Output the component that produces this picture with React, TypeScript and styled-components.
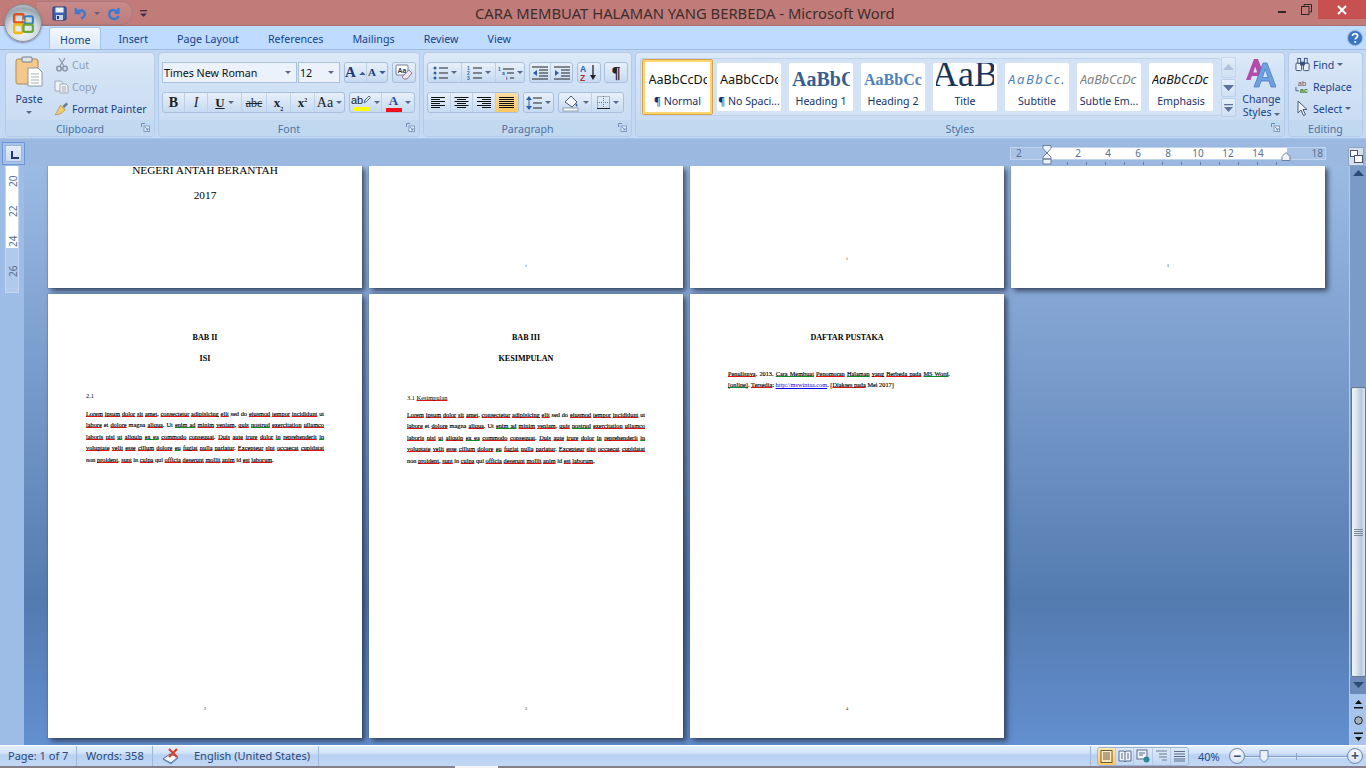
import React from "react";
import styled, { createGlobalStyle } from "styled-components";

const UI = `"Noto Sans", "Open Sans", sans-serif`;
const SERIF = `"Liberation Serif", serif`;

const Global = createGlobalStyle`
  html, body { margin: 0; padding: 0; height: 100%; overflow: hidden; }
  body { font-family: ${UI}; background: #bfdbff; }
  * { box-sizing: border-box; }
`;

const Win = styled.div`
  width: 1366px;
  height: 768px;
  display: flex;
  flex-direction: column;
  position: relative;
  overflow: hidden;
`;

/* title bar */
const TitleBar = styled.div`
  height: 26px;
  background: #c17c7a;
  border-bottom: 1px solid #a8706f;
  display: flex;
  align-items: flex-start;
  flex-shrink: 0;
`;
const Qat = styled.div`
  width: 96px;
  height: 24px;
  margin-left: 37px;
  margin-top: 1px;
  padding-left: 15px;
  border: 1px solid #a57b7f;
  border-left: none;
  border-radius: 0 12px 12px 0;
  background: linear-gradient(#c88a88, #bd7d7c);
  display: flex;
  align-items: center;
  gap: 6px;
`;
const QatMore = styled.div`
  width: 20px;
  height: 24px;
  margin-top: 1px;
  display: flex;
  align-items: center;
  justify-content: center;
`;
const TitleText = styled.div`
  margin-left: 322px;
  width: 424px;
  font-size: 14.8px;
  line-height: 27px;
  color: #3d2d2d;
  white-space: nowrap;
`;
const WinButtons = styled.div`
  margin-left: auto;
  display: flex;
  align-items: flex-start;
`;
const WinBtn = styled.div<{ $w: number; $close?: boolean }>`
  width: ${(p) => p.$w}px;
  height: 19px;
  background: ${(p) => (p.$close ? "#c75050" : "transparent")};
  display: flex;
  align-items: center;
  justify-content: center;
`;

/* orb */
const Orb = styled.div`
  position: absolute;
  z-index: 3;
  left: 4px;
  top: 4px;
  width: 38px;
  height: 38px;
  border-radius: 50%;
  background: radial-gradient(circle at 50% 75%, #eef4f8 0%, #d3dce3 45%, #98a4af 72%, #e4e9ee 100%);
  border: 1px solid #8b8f96;
  box-shadow: 0 1px 2px rgba(60, 60, 90, 0.5);
  display: flex;
  align-items: center;
  justify-content: center;
`;

/* tabs */
const TabRow = styled.div`
  height: 23px;
  background: #bfdbff;
  display: flex;
  align-items: flex-end;
  padding-left: 49px;
  gap: 7px;
  position: relative;
  flex-shrink: 0;
`;
const Tab = styled.div<{ $active?: boolean }>`
  height: 22px;
  padding: 0 11px;
  font-size: 10.7px;
  line-height: 25px;
  color: #15428b;
  border-radius: 3px 3px 0 0;
  ${(p) =>
    p.$active
      ? `background: linear-gradient(#f4f8fe, #dbe8f8); border: 1px solid #a4c2e4; border-bottom: none; padding: 0 10px; margin-right: -1px;`
      : ""}
`;
const HelpBtn = styled.div`
  position: absolute;
  right: 3px;
  top: 3px;
  width: 16px;
  height: 16px;
`;

/* ribbon */
const Ribbon = styled.div`
  height: 90px;
  background: linear-gradient(#c0d8f6, #c4d9f3);
  border-top: 1px solid #9fbcdd;
  border-bottom: 1px solid #aac4e4;
  padding: 2px 3px 0 5px;
  display: flex;
  gap: 3px;
  flex-shrink: 0;
`;
const Group = styled.div<{ $w: number }>`
  width: ${(p) => p.$w}px;
  height: 85px;
  border: 1px solid #b3cbe7;
  border-radius: 4px;
  display: flex;
  flex-direction: column;
  background: linear-gradient(#dde9f8 0, #d5e4f6 20%, #c7daf2 100%);
  overflow: hidden;
  flex-shrink: 0;
`;
const GroupBody = styled.div`
  flex: 1;
  min-height: 0;
  display: flex;
`;
const GroupLabel = styled.div`
  height: 16px;
  position: relative;
  background: #c1d8f1;
  color: #4f71a0;
  font-size: 10.6px;
  line-height: 18px;
  text-align: center;
`;
const LauncherBox = styled.svg`
  position: absolute;
  right: 4px;
  top: 3px;
`;
const PasteBtn = styled.div`
  width: 46px;
  display: flex;
  flex-direction: column;
  align-items: center;
  padding-top: 3px;
  font-size: 10.6px;
  color: #15428b;
  line-height: 14px;
`;
const PasteLabel = styled.span`
  margin-top: 5px;
`;
const PasteCaret = styled.span`
  margin-top: 4px;
  line-height: 0;
`;
const SmallCol = styled.div<{ $ml?: number }>`
  display: flex;
  flex-direction: column;
  margin-left: ${(p) => p.$ml ?? 2}px;
`;
const SmallRow = styled.div<{ $off?: boolean }>`
  height: 22px;
  padding-top: 1px;
  display: flex;
  align-items: center;
  gap: 3px;
  font-size: 10.6px;
  white-space: nowrap;
  color: ${(p) => (p.$off ? "#8c9db3" : "#15428b")};
`;
const IconSlot = styled.span`
  width: 15px;
  height: 16px;
  display: inline-flex;
  align-items: center;
  justify-content: center;
`;
const Stack = styled.div<{ $top: number; $left: number; $gap: number }>`
  display: flex;
  flex-direction: column;
  gap: ${(p) => p.$gap}px;
  padding-top: ${(p) => p.$top}px;
  padding-left: ${(p) => p.$left}px;
`;
const CtlRow = styled.div`
  display: flex;
  gap: 4px;
  height: 21px;
`;
const ComboPair = styled.div`
  display: flex;
  gap: 1px;
`;
const Combo = styled.div<{ $w: number }>`
  width: ${(p) => p.$w}px;
  height: 21px;
  background: #ebf2fb;
  border: 1px solid #abc2de;
  font-size: 10.7px;
  line-height: 21px;
  padding-left: 1px;
  color: #111;
  position: relative;
`;
const BtnGroup = styled.div<{ $ml?: number }>`
  display: flex;
  height: 21px;
  margin-left: ${(p) => p.$ml || 0}px;
  border: 1px solid #a9c0dc;
  border-radius: 3px;
  background: linear-gradient(#e8f0fa 0, #d7e5f6 50%, #c6daf2 100%);
  overflow: hidden;
`;
const Seg = styled.div<{ $w: number; $on?: boolean }>`
  width: ${(p) => p.$w}px;
  height: 100%;
  display: flex;
  align-items: center;
  justify-content: center;
  gap: 3px;
  border-right: 1px solid #bcd0e8;
  color: #222;
  background: ${(p) => (p.$on ? "linear-gradient(#fbe0a0, #fbc760)" : "transparent")};
  &:last-child { border-right: none; }
`;
const Caret = styled.span<{ $c?: string }>`
  width: 0;
  height: 0;
  border-left: 3px solid transparent;
  border-right: 3px solid transparent;
  border-top: 3px solid ${(p) => p.$c || "#56688a"};
  display: inline-block;
`;
const ComboCaret = styled(Caret)`
  position: absolute;
  right: 5px;
  top: 8px;
`;
const Glyph = styled.span<{ $size?: number; $bold?: boolean; $italic?: boolean; $strike?: boolean; $under?: boolean; $color?: string; $sans?: boolean }>`
  font-family: ${(p) => (p.$sans ? `"Liberation Sans", sans-serif` : SERIF)};
  font-size: ${(p) => p.$size || 13}px;
  font-weight: ${(p) => (p.$bold ? 700 : 400)};
  font-style: ${(p) => (p.$italic ? "italic" : "normal")};
  text-decoration: ${(p) => (p.$strike ? "line-through" : p.$under ? "underline" : "none")};
  color: ${(p) => p.$color || "#222"};
  line-height: 1;
  white-space: nowrap;
  sub, sup { font-size: 6px; line-height: 0; }
`;
const Swatch = styled.span<{ $c: string }>`
  display: flex;
  flex-direction: column;
  align-items: center;
  line-height: 1;
  &::after {
    content: "";
    width: 16px;
    height: 4px;
    margin-top: 1px;
    background: ${(p) => p.$c};
  }
`;
const Gallery = styled.div`
  width: 593px;
  height: 58px;
  margin-left: 4px;
  margin-top: 5px;
  display: flex;
  align-items: center;
  background: #d3e2f5;
  border: 1px solid #bed2ea;
  border-right: none;
  border-radius: 3px;
  padding-left: 1px;
`;
const TileSlot = styled.div<{ $sel?: boolean }>`
  width: ${(p) => (p.$sel ? 71 : 64)}px;
  height: ${(p) => (p.$sel ? 56 : 48)}px;
  margin-right: ${(p) => (p.$sel ? 4 : 8)}px;
  flex-shrink: 0;
  padding: ${(p) => (p.$sel ? "3px 3px" : 0)};
  background: #fff;
  border-radius: 2px;
  ${(p) => (p.$sel ? `border: 1px solid #d7a24d; box-shadow: inset 0 0 0 2px #fbd66f;` : "")}
  display: flex;
  flex-direction: column;
  align-items: center;
  overflow: hidden;
`;
const Sample = styled.div<{ $font?: string; $size: number; $color: string; $bold?: boolean; $italic?: boolean; $ls?: number; $lh?: number }>`
  height: 30px;
  width: 58px;
  overflow: hidden;
  white-space: nowrap;
  font-family: ${(p) => p.$font || UI};
  font-size: ${(p) => p.$size}px;
  color: ${(p) => p.$color};
  font-weight: ${(p) => (p.$bold ? 700 : 400)};
  font-style: ${(p) => (p.$italic ? "italic" : "normal")};
  letter-spacing: ${(p) => p.$ls || 0}px;
  line-height: ${(p) => p.$lh || 33}px;
  display: flex;
  justify-content: ${(p) => (p.$lh ? "center" : "flex-start")};
`;
const Caption = styled.div`
  font-size: 10.6px;
  line-height: 19px;
  color: #15306b;
  white-space: nowrap;
  width: 64px;
  text-align: center;
  overflow: hidden;
`;
const GalleryScroll = styled.div`
  width: 15px;
  margin-top: 4px;
  height: 60px;
  display: flex;
  flex-direction: column;
  gap: 1px;
`;
const ScrollPart = styled.div<{ $h: number; $dim?: boolean }>`
  height: ${(p) => p.$h}px;
  border: 1px solid #bcd0e8;
  border-radius: 2px;
  background: linear-gradient(#e6effa, #cfdff3);
  display: flex;
  flex-direction: column;
  align-items: center;
  justify-content: center;
  gap: 2px;
  opacity: ${(p) => (p.$dim ? 0.7 : 1)};
`;
const ChangeStyles = styled.div`
  width: 46px;
  margin-left: 3px;
  padding-top: 5px;
  display: flex;
  flex-direction: column;
  align-items: center;
  font-size: 10.6px;
  line-height: 13px;
  color: #15428b;
  text-align: center;
  white-space: nowrap;
`;
const ChangeLabel = styled.span`
  margin-top: 5px;
`;

/* ruler strip */
const RulerStrip = styled.div`
  height: 27px;
  background: #9ab8e0;
  display: flex;
  flex-shrink: 0;
`;
const TabStop = styled.div`
  width: 23px;
  height: 23px;
  margin: 3px 0 0 2px;
  border: 1px solid #6d96d8;
  background: #a8c3ea;
  padding: 2px;
`;
const TabStopFace = styled.div`
  width: 100%;
  height: 100%;
  background: linear-gradient(#e4edf9, #cbdcf2);
  border: 1px solid #9bb4d6;
  position: relative;
  &::before {
    content: "";
    position: absolute;
    left: 5px;
    top: 5px;
    width: 6px;
    height: 6px;
    border-left: 2px solid #223a66;
    border-bottom: 2px solid #223a66;
  }
`;
const HRuler = styled.div`
  width: 316px;
  height: 13px;
  margin: 8px 0 0 985px;
  display: flex;
  position: relative;
  border: 1px solid #c1d4ee;
  background: #a9c3e8;
  font-size: 10px;
  line-height: 11px;
  color: #5c6f8c;
  text-align: center;
  &::after {
    content: "";
    position: absolute;
    left: 56px;
    top: 14px;
    width: 212px;
    height: 3px;
    background: repeating-linear-gradient(90deg, #6a7f9f 0 1px, transparent 1px 19px);
  }
`;
const RulerMargin = styled.div<{ $w: number; $right?: boolean }>`
  width: ${(p) => p.$w}px;
  text-align: ${(p) => (p.$right ? "right" : "left")};
  padding: ${(p) => (p.$right ? "0 2px 0 0" : "0 0 0 5px")};
`;
const RulerWhite = styled.div`
  width: 239px;
  background: #fff;
  padding-left: 15px;
  display: flex;
`;
const RulerNum = styled.span`
  width: 30px;
  flex-shrink: 0;
`;
const MarkerLeft = styled.svg`
  position: absolute;
  left: 31px;
  top: -3px;
`;
const MarkerRight = styled.svg`
  position: absolute;
  left: 270px;
  top: 4px;
`;
const ViewToggle = styled.div`
  width: 16px;
  height: 19px;
  margin: 8px 0 0 22px;
  border: 1px solid #92a6c4;
  background: #d5e0ef;
  display: flex;
  align-items: center;
  justify-content: center;
`;

/* main */
const Main = styled.div`
  height: 579px;
  display: flex;
  flex-shrink: 0;
`;
const VRulerCol = styled.div`
  width: 24px;
  background: #9dbde6;
  padding-left: 5px;
  flex-shrink: 0;
`;
const VRuler = styled.div`
  width: 14px;
  height: 127px;
  border: 1px solid #c5d7ef;
  border-top: none;
  background: linear-gradient(#fff 0, #fff 82px, #b1c9ea 82px, #b1c9ea 100%);
  color: #5c6f8c;
  font-size: 10px;
  overflow: hidden;
`;
const VNum = styled.div`
  height: 30px;
  display: flex;
  align-items: center;
  justify-content: center;
  writing-mode: vertical-rl;
  transform: rotate(180deg);
`;
const Doc = styled.div`
  width: 1325px;
  background: linear-gradient(#9bbbe4 0, #87a8d6 21%, #547bb0 75%, #628fcf 100%);
  padding-left: 24px;
  display: flex;
  flex-direction: column;
  gap: 6px;
  overflow: hidden;
`;
const PageRow = styled.div`
  display: flex;
  gap: 7px;
`;
const Page = styled.div<{ $h: number }>`
  width: 314px;
  height: ${(p) => p.$h}px;
  background: #fff;
  box-shadow: 0 0 1px #3f4f6a, 3px 3px 5px rgba(35, 45, 65, 0.75);
  display: flex;
  flex-direction: column;
  align-items: center;
  padding: 0 38px;
  font-family: ${SERIF};
  color: #000;
  flex-shrink: 0;
`;
const CoverLine = styled.div<{ $mt?: number }>`
  font-size: 11.3px;
  line-height: 8px;
  margin-top: ${(p) => p.$mt || 0}px;
  white-space: nowrap;
`;
const PageNum = styled.div<{ $b: number }>`
  margin-top: auto;
  margin-bottom: ${(p) => p.$b}px;
  font-size: 5px;
  line-height: 5px;
  color: #333;
`;
const Heading = styled.div<{ $mt: number }>`
  font-size: 8.1px;
  font-weight: 700;
  line-height: 8px;
  margin-top: ${(p) => p.$mt}px;
  white-space: nowrap;
`;
const SubHead = styled.div<{ $mt: number }>`
  align-self: flex-start;
  font-size: 6.4px;
  line-height: 8px;
  margin-top: ${(p) => p.$mt}px;
  white-space: nowrap;
`;
const Para = styled.div<{ $mt: number; $w?: number }>`
  width: ${(p) => p.$w || 238}px;
  align-self: flex-start;
  margin-top: ${(p) => p.$mt}px;
  font-size: 6.3px;
  line-height: 11.4px;
  -webkit-text-stroke: 0.15px #000;
`;
const ParaLine = styled.div<{ $last?: boolean }>`
  white-space: nowrap;
  text-align: justify;
  text-align-last: ${(p) => (p.$last ? "left" : "justify")};
`;
const Err = styled.span<{ $g?: boolean }>`
  text-decoration: underline solid ${(p) => (p.$g ? "#0b8a2a" : "#e01010")} 1px;
  text-decoration-skip-ink: none;
  text-underline-offset: 0;
`;
const LinkText = styled.span`
  color: #0000e6;
  -webkit-text-stroke: 0;
  text-decoration: underline;
`;

/* scrollbar */
const VScroll = styled.div`
  width: 17px;
  background: #7a9bc8;
  border-left: 1px solid #b0cbee;
  display: flex;
  flex-direction: column;
  align-items: center;
  flex-shrink: 0;
`;
const ScrollUp = styled.div`
  height: 221px;
  width: 100%;
  padding-top: 4px;
  display: flex;
  justify-content: center;
`;
const Thumb = styled.div`
  width: 15px;
  height: 290px;
  border: 1px solid #64778f;
  border-radius: 2px;
  background: linear-gradient(90deg, #f0f5fb, #dfe7f2 30%, #b9c8dc 70%, #dde6f2);
  display: flex;
  align-items: center;
  justify-content: center;
`;
const Grip = styled.div`
  width: 9px;
  height: 7px;
  background: repeating-linear-gradient(#7c8ba0 0 1px, transparent 1px 2px);
`;
const ScrollDown = styled.div`
  height: 17px;
  width: 100%;
  background: #6c8bb9;
  display: flex;
  align-items: center;
  justify-content: center;
`;
const NavCol = styled.div`
  flex: 1;
  width: 100%;
  background: #a7c4ec;
  display: flex;
  flex-direction: column;
  align-items: center;
  justify-content: space-around;
  padding: 2px 0 0;
`;

/* status bar */
const Status = styled.div`
  height: 21px;
  background: linear-gradient(#e6f0fc 0, #d2e3f9 35%, #b9d1f1 45%, #c2d8f5 100%);
  border-top: 1px solid #fff;
  display: flex;
  align-items: center;
  font-size: 11px;
  color: #2a4a7a;
  flex-shrink: 0;
`;
const StatusCell = styled.div<{ $w: number; $pl: number }>`
  width: ${(p) => p.$w}px;
  padding-left: ${(p) => p.$pl}px;
  height: 100%;
  line-height: 20px;
  border-right: 1px solid #9fb8d8;
  white-space: nowrap;
  display: flex;
  align-items: center;
  gap: 14px;
`;
const StatusRight = styled.div`
  margin-left: auto;
  width: 276px;
  height: 100%;
  border-left: 1px solid #9fb8d8;
  padding-left: 6px;
  display: flex;
  align-items: center;
`;
const ViewGroup = styled.div`
  width: 92px;
  height: 19px;
  display: flex;
  border: 1px solid #9db6d6;
  border-radius: 3px;
  overflow: hidden;
`;
const ViewBtn = styled.div<{ $on?: boolean }>`
  flex: 1;
  display: flex;
  align-items: center;
  justify-content: center;
  border-right: 1px solid #b5cae6;
  background: ${(p) => (p.$on ? "linear-gradient(#fde6ad, #fbc965)" : "linear-gradient(#dce9f9, #c2d7f2)")};
  &:last-child { border-right: none; }
`;
const Zoom = styled.span`
  margin-left: 9px;
  width: 31px;
  color: #1f4a8c;
`;
const RoundBtn = styled.div`
  width: 16px;
  height: 16px;
  flex-shrink: 0;
  border-radius: 50%;
  border: 1px solid #6f88aa;
  background: radial-gradient(circle at 50% 30%, #fff, #c8d8ec);
  display: flex;
  align-items: center;
  justify-content: center;
  color: #3c4f6c;
  font-weight: 700;
  font-size: 14px;
  line-height: 1;
`;
const Slider = styled.div`
  width: 102px;
  height: 1px;
  background: #7f9cc4;
  box-shadow: 0 1px 0 #e6f0fb;
  position: relative;
`;
const SliderTick = styled.span`
  position: absolute;
  left: 51px;
  top: -3px;
  width: 1px;
  height: 7px;
  background: #8aa4c8;
`;
const SliderThumb = styled.svg`
  position: absolute;
  left: 14px;
  top: -6px;
`;
const BottomEdge = styled.div`
  height: 2px;
  background: #877e8c;
  padding-left: 455px;
  flex-shrink: 0;
`;
const EdgeTab = styled.div`
  width: 43px;
  height: 2px;
  background: #f5f5f5;
`;

/* icons */
const OfficeLogo = () => (
  <svg width="25" height="25" viewBox="0 0 24 24">
    <rect x="3" y="3" width="9" height="8" rx="1.5" fill="none" stroke="#d9541e" strokeWidth="2.4" />
    <rect x="13" y="5" width="8" height="7" rx="1.5" fill="none" stroke="#2e7fc4" strokeWidth="2" />
    <rect x="3" y="13" width="8" height="8" rx="1.5" fill="none" stroke="#f2b81c" strokeWidth="2.4" />
    <rect x="12" y="13" width="9" height="7" rx="1.5" fill="none" stroke="#6aa83a" strokeWidth="2.2" />
    <g fill="#e8c23a"><circle cx="12" cy="9" r="1" /><circle cx="15" cy="9" r="1" /><circle cx="9" cy="14" r="1" /></g>
  </svg>
);
const Launcher = () => (
  <LauncherBox width="9" height="9" viewBox="0 0 9 9">
    <path d="M.5 4V.5H4" fill="none" stroke="#6f8ab0" />
    <rect x="3" y="3" width="5.500" height="5.500" fill="#e6eef8" stroke="#7f9bbf" />
    <path d="M4 4l3 3M7 5v2H5" fill="none" stroke="#5d7ca5" strokeWidth=".8" />
  </LauncherBox>
);
const SaveIcon = () => (
  <svg width="15" height="15" viewBox="0 0 15 15">
    <rect x="1" y="1" width="13" height="13" rx="1" fill="#3c62b0" stroke="#20387a" />
    <rect x="3.500" y="1.500" width="8" height="5" fill="#eef3fa" />
    <rect x="4" y="9" width="7" height="5" fill="#c9d4e6" />
    <rect x="5" y="10" width="2" height="3" fill="#20387a" />
  </svg>
);
const UndoIcon = () => (
  <svg width="15" height="15" viewBox="0 0 16 15" fill="none">
    <path d="M3 2v5h5" stroke="#3d7ad0" strokeWidth="2.400" />
    <path d="M3.500 6.500C6 3.500 12 3.500 12.500 7.500c.3 2.500-2 4.500-4 5.500" stroke="#3d7ad0" strokeWidth="2.600" />
  </svg>
);
const RedoIcon = () => (
  <svg width="16" height="15" viewBox="0 0 16 15" fill="none">
    <path d="M12.500 2v5h-4" stroke="#3d7ad0" strokeWidth="2.200" />
    <path d="M12 6.500C10 3.500 5 3 3.500 6.500c-1.200 3 .8 6 4 6.500 2 .2 4-.8 5-3" stroke="#3d7ad0" strokeWidth="2.400" />
  </svg>
);
const QatCaret = () => (
  <svg width="9" height="9" viewBox="0 0 9 9">
    <rect x="1" y="1" width="7" height="1.400" fill="#40304a" />
    <path d="M1 4.500h7L4.500 8z" fill="#40304a" />
  </svg>
);
const HelpIcon = () => (
  <svg width="16" height="16" viewBox="0 0 16 16">
    <circle cx="8" cy="8" r="7.500" fill="#3b74c4" stroke="#9ab7dc" />
    <path d="M5.500 6c0-3 5.200-3 5.200-.2 0 1.900-2.400 1.900-2.400 3.700" fill="none" stroke="#fff" strokeWidth="1.700" />
    <circle cx="8.200" cy="12" r="1.100" fill="#fff" />
  </svg>
);
const PasteIcon = () => (
  <svg width="28" height="31" viewBox="0 0 28 31">
    <rect x="1" y="3" width="22" height="25" rx="2" fill="#f3c88a" stroke="#b08a50" />
    <rect x="7" y="1" width="10" height="5" rx="1" fill="#dfe3ea" stroke="#707c8c" />
    <path d="M13 12h10l4 4v14H13z" fill="#fff" stroke="#8a97a8" />
    <path d="M16 18h8M16 21h8M16 24h8M16 27h8" stroke="#a4afbd" />
  </svg>
);
const CutIcon = () => (
  <svg width="14" height="15" viewBox="0 0 14 15" fill="none" stroke="#8d99a8" strokeWidth="1.200">
    <path d="M4 1l5 8M10 1L5 9" />
    <circle cx="4" cy="11.500" r="2.300" strokeWidth="1.600" />
    <circle cx="10" cy="11.500" r="2.300" strokeWidth="1.600" />
  </svg>
);
const CopyIcon = () => (
  <svg width="15" height="14" viewBox="0 0 15 14" fill="#eef2f7" stroke="#a1abb8">
    <path d="M1 1h6l2 2v8H1z" />
    <path d="M6 4h6l2 2v7H6z" />
    <path d="M8 7h4M8 9h4M8 11h4" />
  </svg>
);
const BrushIcon = () => (
  <svg width="16" height="15" viewBox="0 0 16 15">
    <path d="M9 5l4-4 2 2-4 4z" fill="#6a7a90" />
    <path d="M7 4l5 5-2 1.500C8.500 13 4 14.500 1 14c2-1 2-3 3.500-5.500z" fill="#f0cc6a" stroke="#a8843a" strokeWidth=".7" />
  </svg>
);
const GrowIcon = ({ up }: { up: boolean }) => (
  <svg width="7" height="4" viewBox="0 0 8 5">
    <path d={up ? "M0 5l4-4 4 4z" : "M0 0h8L4 4z"} fill="#3a5c90" />
  </svg>
);
const ClearIcon = () => (
  <svg width="18" height="17" viewBox="0 0 18 17">
    <rect x="1" y="1" width="12" height="10" rx="1" fill="#fff" stroke="#6e7f96" />
    <text x="2.500" y="9" fontSize="7" fontFamily="Liberation Sans" fontWeight="700" fill="#24426e">Aa</text>
    <path d="M9 11l5-5 3 3-5 6H9l-2-2z" fill="#f0e4ee" stroke="#8a7c90" />
  </svg>
);
const HighlightIcon = () => (
  <Swatch $c="#ffff00">
    <Glyph $size={11} $sans>
      ab
      <svg width="8" height="9" viewBox="0 0 8 9"><path d="M1 8l1-3 4-4 1.500 1.500-4 4z" fill="none" stroke="#5a6a80" /></svg>
    </Glyph>
  </Swatch>
);
const BulletsIcon = () => (
  <svg width="15" height="14" viewBox="0 0 15 14">
    <g fill="#2d5fa8"><circle cx="2" cy="2" r="1.500" /><circle cx="2" cy="7" r="1.500" /><circle cx="2" cy="12" r="1.500" /></g>
    <path d="M6 2h9M6 7h9M6 12h9" stroke="#222" />
  </svg>
);
const NumbersIcon = () => (
  <svg width="15" height="14" viewBox="0 0 15 14">
    <g fontSize="5" fontFamily="Liberation Sans" fill="#2d5fa8" fontWeight="700">
      <text x="0" y="4">1</text><text x="0" y="9">2</text><text x="0" y="14">3</text>
    </g>
    <path d="M6 2h9M6 7h9M6 12h9" stroke="#222" />
  </svg>
);
const MultiIcon = () => (
  <svg width="16" height="14" viewBox="0 0 16 14">
    <g fontSize="5" fontFamily="Liberation Sans" fill="#2d5fa8" fontWeight="700">
      <text x="0" y="5">1</text><text x="4" y="9">a</text><text x="8" y="14">i</text>
    </g>
    <path d="M5 3h11M9 7h7M12 12h4" stroke="#222" />
  </svg>
);
const IndentIcon = ({ rev }: { rev?: boolean }) => (
  <svg width="16" height="14" viewBox="0 0 16 14">
    <path d="M0 1h16M7 4h9M7 7h9M7 10h9M0 13h16" stroke="#222" />
    <path d={rev ? "M5 4v6L1 7z" : "M1 4v6l4-3z"} fill="#2d5fa8" />
  </svg>
);
const SortIcon = () => (
  <svg width="18" height="17" viewBox="0 0 18 17">
    <text x="0" y="8" fontSize="8.500" fontWeight="700" fontFamily="Liberation Sans" fill="#2d5fa8">A</text>
    <text x="0" y="16.500" fontSize="8.500" fontWeight="700" fontFamily="Liberation Sans" fill="#b03030">Z</text>
    <path d="M13 1v13" stroke="#222" strokeWidth="1.300" />
    <path d="M10 11h6l-3 5z" fill="#222" />
  </svg>
);
const AlignIcon = ({ mode }: { mode: "l" | "c" | "r" | "j" }) => {
  const rows = [14, 9, 14, 9, 14, 9];
  return (
    <svg width="15" height="13" viewBox="0 0 15 13">
      {rows.map((w, i) => {
        const len = mode === "j" ? 15 : w;
        const x = mode === "c" ? (15 - len) / 2 : mode === "r" ? 15 - len : 0;
        return <rect key={i} x={x} y={i * 2 + 1} width={len} height="1" fill="#111" />;
      })}
    </svg>
  );
};
const SpacingIcon = () => (
  <svg width="16" height="16" viewBox="0 0 16 16">
    <path d="M3 1l3 4H0zM3 15l3-4H0z" fill="#2d5fa8" />
    <path d="M3 4v8" stroke="#2d5fa8" />
    <path d="M7 3h9M7 8h9M7 13h9" stroke="#222" />
  </svg>
);
const BucketIcon = () => (
  <svg width="18" height="18" viewBox="0 0 18 18">
    <path d="M3 8l6-6 6 6-5 5z" fill="#f3f5f8" stroke="#4a5a70" />
    <path d="M14 9c1.500 2 2 3 1 3.500S13 11 14 9z" fill="#2d5fa8" />
    <rect x="1" y="14" width="15" height="3" fill="#fff" stroke="#8d9db2" />
  </svg>
);
const BordersIcon = () => (
  <svg width="13" height="13" viewBox="0 0 13 13" fill="none" stroke="#6d7d92" strokeDasharray="1 1">
    <rect x=".5" y=".5" width="12" height="12" />
    <path d="M6.500 0v13M0 6.500h13" />
    <path d="M0 12.500h13" stroke="#222" strokeDasharray="none" />
  </svg>
);
const ChangeStylesIcon = () => (
  <svg width="30" height="30" viewBox="0 0 30 30">
    <path fillRule="evenodd" d="M0 22L8 1h4l5 13-3 8-1.500-4H6l-1.500 4zM7.200 14.500h4L9.200 8.500z" fill="#b44ba8" />
    <path fillRule="evenodd" d="M8 29L17 5h4l9 24h-5l-2-6h-8l-2 6zM16.500 19.500h5.500L19.200 11z" fill="#6ea2de" stroke="#3b74bb" strokeWidth=".7" />
  </svg>
);
const BinocularsIcon = () => (
  <svg width="16" height="15" viewBox="0 0 16 15" fill="#e9eef5" stroke="#36507a">
    <rect x="1" y="6" width="6" height="8" rx="1" />
    <rect x="9" y="6" width="6" height="8" rx="1" />
    <rect x="3" y="1" width="3" height="5" />
    <rect x="10" y="1" width="3" height="5" />
    <rect x="6" y="5" width="4" height="3" fill="#36507a" />
  </svg>
);
const ReplaceIcon = () => (
  <svg width="16" height="15" viewBox="0 0 16 15">
    <text x="3" y="6.500" fontSize="8" fontFamily="Liberation Sans" fill="#556">ab</text>
    <text x="5" y="14.500" fontSize="8" fontWeight="700" fontFamily="Liberation Sans" fill="#2f8a3a">ac</text>
    <path d="M1 8v4h3" stroke="#3a5c90" fill="none" />
  </svg>
);
const CursorIcon = () => (
  <svg width="13" height="17" viewBox="0 0 13 17">
    <path d="M2 1v12l3-3 2.500 5.500 2-1L7 9.500h4z" fill="#eef2f8" stroke="#4c5d78" />
  </svg>
);
const Triangle = ({ up, c }: { up?: boolean; c: string }) => (
  <svg width="11" height="7" viewBox="0 0 11 7">
    <path d={up ? "M0 6h11L5.500 0z" : "M0 0h11L5.500 6z"} fill={c} />
  </svg>
);
const DoubleCaret = ({ up }: { up: boolean }) => (
  <svg width="9" height="9" viewBox="0 0 9 9" fill="#111">
    <path d={up ? "M1 4h7L4.500 0zM0 7h9v1.400H0z" : "M1 5h7L4.500 9zM0 .600h9V2H0z"} />
  </svg>
);
const SpellIcon = () => (
  <svg width="18" height="17" viewBox="0 0 18 17">
    <path d="M1 11l7-5 8 3-7 6z" fill="#f4f6fb" stroke="#456a9e" />
    <path d="M2 12l7 4 7-6" fill="none" stroke="#6d90bf" />
    <path d="M7 1l8 8M15 1L7 9" stroke="#d8402a" strokeWidth="2.200" />
  </svg>
);
const ViewLines = ({ c }: { c: string }) => (
  <svg width="13" height="13" viewBox="0 0 13 13">
    <rect x="1" y=".5" width="11" height="12" fill="#fff" fillOpacity=".5" stroke={c} />
    <path d="M3 3h7M3 5h7M3 7h7M3 9h7" stroke={c} />
  </svg>
);
const ViewBook = () => (
  <svg width="14" height="13" viewBox="0 0 14 13" fill="#eef3fa" stroke="#5b6d88">
    <path d="M1 1h5l1 1 1-1h5v10H8l-1 1-1-1H1z" />
    <path d="M3 4h2M3 6h2M3 8h2M9 4h2M9 6h2M9 8h2M7 2v10" />
  </svg>
);
const ViewWeb = () => (
  <svg width="14" height="14" viewBox="0 0 14 14">
    <rect x="1" y="1" width="10" height="9" fill="#eef3fa" stroke="#5b6d88" />
    <path d="M3 4h6M3 6h4" stroke="#5b6d88" />
    <circle cx="10.500" cy="10.500" r="3" fill="#2a8a9a" />
  </svg>
);
const ViewOutline = () => (
  <svg width="13" height="12" viewBox="0 0 13 12" stroke="#6b7c94">
    <path d="M1 1h11M4 4h8M4 7h8M7 10h5" />
  </svg>
);
const ViewDraft = () => (
  <svg width="13" height="12" viewBox="0 0 13 12" stroke="#5b6d88">
    <path d="M1 1.500h11M1 4h11M1 6.500h11M1 9h11M1 11h11" />
  </svg>
);

const tiles = [
  { cap: "¶ Normal", text: "AaBbCcDc", size: 12.6, color: "#111", sel: true },
  { cap: "¶ No Spaci...", text: "AaBbCcDc", size: 12.6, color: "#111" },
  { cap: "Heading 1", text: "AaBbCc", size: 20, color: "#365f91", bold: true, font: SERIF },
  { cap: "Heading 2", text: "AaBbCc", size: 16, color: "#4f81bd", bold: true, font: SERIF },
  { cap: "Title", text: "AaB", size: 36, color: "#17365d", font: SERIF, lh: 23 },
  { cap: "Subtitle", text: "AaBbCc.", size: 13, color: "#4f81bd", italic: true, ls: 1.6 },
  { cap: "Subtle Em...", text: "AaBbCcDc", size: 12.6, color: "#808080", italic: true },
  { cap: "Emphasis", text: "AaBbCcDc", size: 12.6, color: "#111", italic: true },
];

const LoremBody = () => (
  <>
    <ParaLine>
      <Err>Lorem</Err> <Err>ipsum</Err> <Err>dolor</Err> <Err>sit</Err> <Err>amet</Err>, <Err>consectetur</Err> <Err>adipisicing</Err> <Err>elit</Err> sed do <Err>eiusmod</Err> <Err>tempor</Err> <Err>incididunt</Err> ut
    </ParaLine>
    <ParaLine>
      <Err>labore</Err> et <Err>dolore</Err> magna <Err>aliqua</Err>. Ut <Err $g>enim ad</Err> <Err>minim</Err> <Err>veniam</Err>, <Err>quis</Err> <Err $g>nostrud</Err> <Err>exercitation</Err> <Err>ullamco</Err>
    </ParaLine>
    <ParaLine>
      <Err>laboris</Err> <Err>nisi</Err> <Err $g>ut</Err> <Err>aliquip</Err> <Err $g>ex ea</Err> <Err>commodo</Err> <Err>consequat</Err>. <Err>Duis</Err> <Err>aute</Err> <Err>irure</Err> <Err>dolor</Err> <Err $g>in</Err> <Err>reprehenderit</Err> <Err $g>in</Err>
    </ParaLine>
    <ParaLine>
      <Err>voluptate</Err> <Err>velit</Err> <Err>esse</Err> <Err>cillum</Err> <Err>dolore</Err> <Err $g>eu</Err> <Err>fugiat</Err> <Err>nulla</Err> <Err>pariatur</Err>. <Err>Excepteur</Err> <Err>sint</Err> <Err>occaecat</Err> <Err>cupidatat</Err>
    </ParaLine>
    <ParaLine $last>
      non <Err>proident</Err>, <Err>sunt</Err> in <Err>culpa</Err> qui <Err>officia</Err> <Err>deserunt</Err> <Err>mollit</Err> <Err>anim</Err> id <Err>est</Err> <Err>laborum</Err>.
    </ParaLine>
  </>
);

export default function App() {
  return (
    <Win>
      <Global />
      <TitleBar>
        <Qat>
          <SaveIcon />
          <UndoIcon />
          <Caret $c="#6a5a78" />
          <RedoIcon />
        </Qat>
        <QatMore><QatCaret /></QatMore>
        <TitleText>CARA MEMBUAT HALAMAN YANG BERBEDA - Microsoft Word</TitleText>
        <WinButtons>
          <WinBtn $w={25}>
            <svg width="9" height="9" viewBox="0 0 9 9"><rect y="6" width="8" height="2" fill="#2e2a2a" /></svg>
          </WinBtn>
          <WinBtn $w={23}>
            <svg width="11" height="11" viewBox="0 0 11 11" fill="none" stroke="#2e2a2a"><rect x=".5" y="2.500" width="7.500" height="8" /><path d="M3 2.500V.5h7.500v7.500H8" /></svg>
          </WinBtn>
          <WinBtn $w={48} $close>
            <svg width="10" height="10" viewBox="0 0 10 10" stroke="#fff" strokeWidth="2"><path d="M1 1l8 8M9 1L1 9" /></svg>
          </WinBtn>
        </WinButtons>
      </TitleBar>
      <Orb><OfficeLogo /></Orb>
      <TabRow>
        <Tab $active>Home</Tab>
        <Tab>Insert</Tab>
        <Tab>Page Layout</Tab>
        <Tab>References</Tab>
        <Tab>Mailings</Tab>
        <Tab>Review</Tab>
        <Tab>View</Tab>
        <HelpBtn><HelpIcon /></HelpBtn>
      </TabRow>
      <Ribbon>
        <Group $w={150}>
          <GroupBody>
            <PasteBtn>
              <PasteIcon />
              <PasteLabel>Paste</PasteLabel>
              <PasteCaret><Caret /></PasteCaret>
            </PasteBtn>
            <SmallCol>
              <SmallRow $off><IconSlot><CutIcon /></IconSlot>Cut</SmallRow>
              <SmallRow $off><IconSlot><CopyIcon /></IconSlot>Copy</SmallRow>
              <SmallRow><IconSlot><BrushIcon /></IconSlot>Format Painter</SmallRow>
            </SmallCol>
          </GroupBody>
          <GroupLabel>Clipboard<Launcher /></GroupLabel>
        </Group>

        <Group $w={262}>
          <GroupBody>
            <Stack $top={9} $left={3} $gap={9}>
              <CtlRow>
                <ComboPair>
                  <Combo $w={135}>Times New Roman<ComboCaret /></Combo>
                  <Combo $w={42}>12<ComboCaret /></Combo>
                </ComboPair>
                <BtnGroup>
                  <Seg $w={22}><Glyph $size={15} $bold $color="#1c3a6a">A</Glyph><GrowIcon up /></Seg>
                  <Seg $w={20}><Glyph $size={11} $bold $color="#1c3a6a">A</Glyph><GrowIcon up={false} /></Seg>
                </BtnGroup>
                <BtnGroup><Seg $w={22}><ClearIcon /></Seg></BtnGroup>
              </CtlRow>
              <CtlRow>
                <BtnGroup>
                  <Seg $w={22}><Glyph $bold $size={14}>B</Glyph></Seg>
                  <Seg $w={23}><Glyph $italic $size={14}>I</Glyph></Seg>
                  <Seg $w={34}><Glyph $bold $under $size={13}>U</Glyph><Caret /></Seg>
                  <Seg $w={25}><Glyph $strike $size={12}>abc</Glyph></Seg>
                  <Seg $w={24}><Glyph $bold $size={13}>x<sub>2</sub></Glyph></Seg>
                  <Seg $w={24}><Glyph $bold $size={13}>x<sup>2</sup></Glyph></Seg>
                  <Seg $w={29}><Glyph $size={14}>Aa</Glyph><Caret /></Seg>
                </BtnGroup>
                <BtnGroup>
                  <Seg $w={32}><HighlightIcon /><Caret /></Seg>
                  <Seg $w={32}>
                    <Swatch $c="#f01020"><Glyph $size={13} $bold $color="#2a4f9a">A</Glyph></Swatch>
                    <Caret />
                  </Seg>
                </BtnGroup>
              </CtlRow>
            </Stack>
          </GroupBody>
          <GroupLabel>Font<Launcher /></GroupLabel>
        </Group>

        <Group $w={209}>
          <GroupBody>
            <Stack $top={9} $left={3} $gap={9}>
              <CtlRow>
                <BtnGroup>
                  <Seg $w={34}><BulletsIcon /><Caret /></Seg>
                  <Seg $w={34}><NumbersIcon /><Caret /></Seg>
                  <Seg $w={28}><MultiIcon /><Caret /></Seg>
                </BtnGroup>
                <BtnGroup>
                  <Seg $w={21}><IndentIcon rev /></Seg>
                  <Seg $w={21}><IndentIcon /></Seg>
                </BtnGroup>
                <BtnGroup><Seg $w={22}><SortIcon /></Seg></BtnGroup>
                <BtnGroup $ml={-1}><Seg $w={22}><Glyph $size={17} $bold>¶</Glyph></Seg></BtnGroup>
              </CtlRow>
              <CtlRow>
                <BtnGroup>
                  <Seg $w={22.5}><AlignIcon mode="l" /></Seg>
                  <Seg $w={22.5}><AlignIcon mode="c" /></Seg>
                  <Seg $w={22.5}><AlignIcon mode="r" /></Seg>
                  <Seg $w={22.5} $on><AlignIcon mode="j" /></Seg>
                </BtnGroup>
                <BtnGroup><Seg $w={29}><SpacingIcon /><Caret /></Seg></BtnGroup>
                <BtnGroup>
                  <Seg $w={33}><BucketIcon /><Caret /></Seg>
                  <Seg $w={31}><BordersIcon /><Caret /></Seg>
                </BtnGroup>
              </CtlRow>
            </Stack>
          </GroupBody>
          <GroupLabel>Paragraph<Launcher /></GroupLabel>
        </Group>

        <Group $w={650}>
          <GroupBody>
            <Gallery>
              {tiles.map((t) => (
                <TileSlot key={t.cap} $sel={t.sel}>
                  <Sample $font={t.font} $size={t.size} $color={t.color} $bold={t.bold} $italic={t.italic} $ls={t.ls} $lh={t.lh}>
                    {t.text}
                  </Sample>
                  <Caption>{t.cap}</Caption>
                </TileSlot>
              ))}
            </Gallery>
            <GalleryScroll>
              <ScrollPart $h={21} $dim><Triangle up c="#9fb3cc" /></ScrollPart>
              <ScrollPart $h={18}><Triangle c="#5b7299" /></ScrollPart>
              <ScrollPart $h={19}>
                <svg width="9" height="8" viewBox="0 0 9 8"><path d="M0 0h9v1.300H0zM0 3h9L4.500 8z" fill="#5b7299" /></svg>
              </ScrollPart>
            </GalleryScroll>
            <ChangeStyles>
              <ChangeStylesIcon />
              <ChangeLabel>Change</ChangeLabel>
              <span>Styles <Caret /></span>
            </ChangeStyles>
          </GroupBody>
          <GroupLabel>Styles<Launcher /></GroupLabel>
        </Group>

        <Group $w={75}>
          <GroupBody>
            <SmallCol $ml={6}>
              <SmallRow><IconSlot><BinocularsIcon /></IconSlot>Find <Caret /></SmallRow>
              <SmallRow><IconSlot><ReplaceIcon /></IconSlot>Replace</SmallRow>
              <SmallRow><IconSlot><CursorIcon /></IconSlot>Select <Caret /></SmallRow>
            </SmallCol>
          </GroupBody>
          <GroupLabel>Editing</GroupLabel>
        </Group>
      </Ribbon>

      <RulerStrip>
        <TabStop><TabStopFace /></TabStop>
        <HRuler>
          <RulerMargin $w={37}>2</RulerMargin>
          <RulerWhite>
            {[2, 4, 6, 8, 10, 12, 14].map((n) => <RulerNum key={n}>{n}</RulerNum>)}
          </RulerWhite>
          <RulerMargin $w={38} $right>18</RulerMargin>
          <MarkerLeft width="10" height="20" viewBox="0 0 10 20">
            <path d="M1 .5h8v3L5 8 1 3.500zM5 8l4 4v2H1v-2zM1 14h8v5H1z" fill="#eef3fa" stroke="#6f7f96" />
          </MarkerLeft>
          <MarkerRight width="10" height="9" viewBox="0 0 10 9">
            <path d="M5 .5l4 4v4H1v-4z" fill="#eef3fa" stroke="#6f7f96" />
          </MarkerRight>
        </HRuler>
        <ViewToggle>
          <svg width="13" height="13" viewBox="0 0 13 13" fill="#fff" stroke="#465468">
            <rect x=".5" y=".5" width="7" height="6" /><rect x="4.500" y="5.500" width="8" height="7" />
          </svg>
        </ViewToggle>
      </RulerStrip>

      <Main>
        <VRulerCol>
          <VRuler>
            {[20, 22, 24, 26].map((n) => <VNum key={n}>{n}</VNum>)}
          </VRuler>
        </VRulerCol>
        <Doc>
          <PageRow>
            <Page $h={122}>
              <CoverLine>NEGERI ANTAH BERANTAH</CoverLine>
              <CoverLine $mt={17}>2017</CoverLine>
            </Page>
            <Page $h={122}><PageNum $b={20}>i</PageNum></Page>
            <Page $h={122}><PageNum $b={27}>i</PageNum></Page>
            <Page $h={122}><PageNum $b={20}>1</PageNum></Page>
          </PageRow>
          <PageRow>
            <Page $h={444}>
              <Heading $mt={40}>BAB II</Heading>
              <Heading $mt={13}>ISI</Heading>
              <SubHead $mt={29}>2.1</SubHead>
              <Para $mt={8}><LoremBody /></Para>
              <PageNum $b={27}>2</PageNum>
            </Page>
            <Page $h={444}>
              <Heading $mt={40}>BAB III</Heading>
              <Heading $mt={13}>KESIMPULAN</Heading>
              <SubHead $mt={31}>3.1 <Err>Kesimpulan</Err></SubHead>
              <Para $mt={7}><LoremBody /></Para>
              <PageNum $b={27}>3</PageNum>
            </Page>
            <Page $h={444}>
              <Heading $mt={40}>DAFTAR PUSTAKA</Heading>
              <Para $mt={26} $w={222}>
                <ParaLine><Err>Penulisnya</Err>. 2013. <Err $g>Cara Membuat</Err> <Err>Penomoran</Err> <Err $g>Halaman</Err> <Err>yang</Err> <Err>Berbeda pada</Err> <Err $g>MS Word</Err>.</ParaLine>
                <ParaLine $last><Err $g>[online]</Err>. <Err>Tersedia</Err>: <LinkText>http://mswintaa.com</LinkText>. [<Err>Diakses pada</Err> Mei 2017]</ParaLine>
              </Para>
              <PageNum $b={27}>4</PageNum>
            </Page>
          </PageRow>
        </Doc>
        <VScroll>
          <ScrollUp><Triangle up c="#2f4a78" /></ScrollUp>
          <Thumb><Grip /></Thumb>
          <ScrollDown><Triangle c="#2f4a78" /></ScrollDown>
          <NavCol>
            <DoubleCaret up />
            <svg width="9" height="9" viewBox="0 0 9 9"><circle cx="4.500" cy="4.500" r="3.800" fill="#a8b0bc" stroke="#222" /></svg>
            <DoubleCaret up={false} />
          </NavCol>
        </VScroll>
      </Main>

      <Status>
        <StatusCell $w={77} $pl={8}>Page: 1 of 7</StatusCell>
        <StatusCell $w={76} $pl={9}>Words: 358</StatusCell>
        <StatusCell $w={166} $pl={9}><SpellIcon />English (United States)</StatusCell>
        <StatusRight>
          <ViewGroup>
            <ViewBtn $on><ViewLines c="#6a5a30" /></ViewBtn>
            <ViewBtn><ViewBook /></ViewBtn>
            <ViewBtn><ViewWeb /></ViewBtn>
            <ViewBtn><ViewOutline /></ViewBtn>
            <ViewBtn><ViewDraft /></ViewBtn>
          </ViewGroup>
          <Zoom>40%</Zoom>
          <RoundBtn>−</RoundBtn>
          <Slider>
            <SliderTick />
            <SliderThumb width="10" height="13" viewBox="0 0 10 13">
              <path d="M1 .5h8v8l-4 4-4-4z" fill="#eaf0f8" stroke="#6f88aa" />
            </SliderThumb>
          </Slider>
          <RoundBtn>+</RoundBtn>
        </StatusRight>
      </Status>
      <BottomEdge><EdgeTab /></BottomEdge>
    </Win>
  );
}
